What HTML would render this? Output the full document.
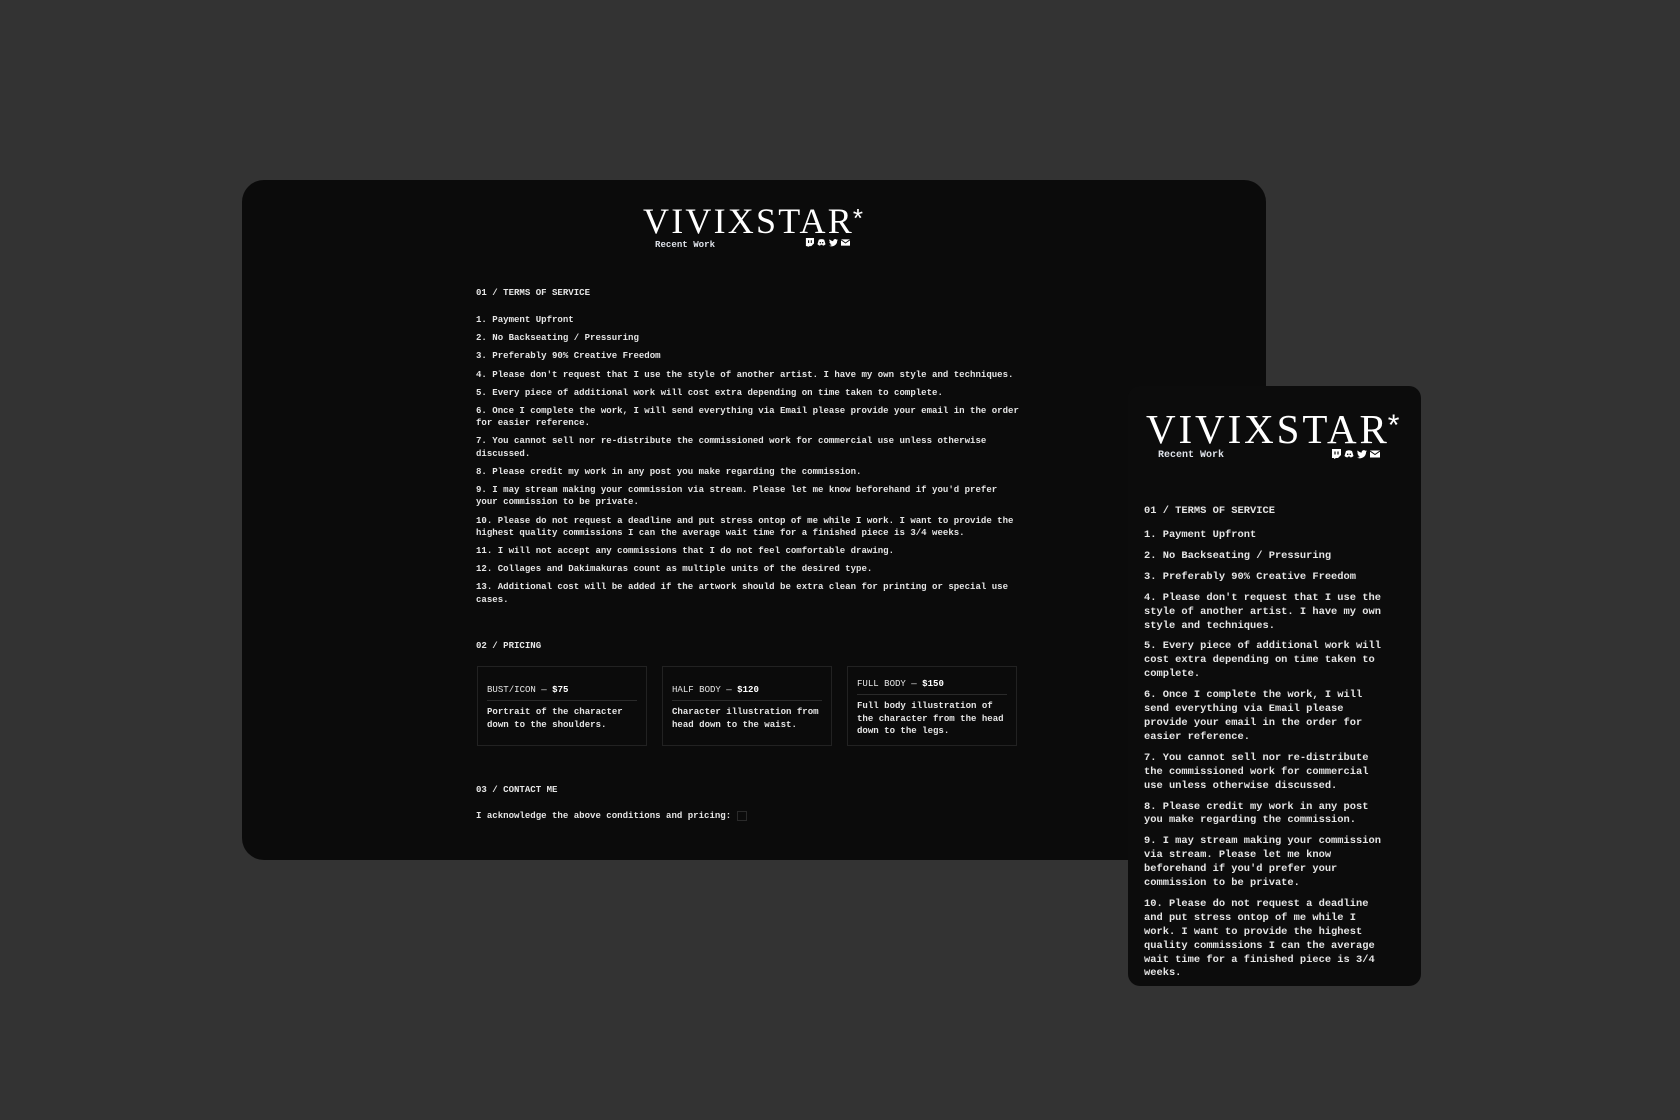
<!DOCTYPE html>
<html><head><meta charset="utf-8"><style>
*{margin:0;padding:0;box-sizing:border-box}
body{width:1680px;height:1120px;background:#333;position:relative;overflow:hidden;font-family:"Liberation Mono",monospace;color:#e6e6e6}
.card{position:absolute;background:#0b0b0b;overflow:hidden}
.main{left:242px;top:180px;width:1024px;height:680px;border-radius:22px}
.phone{left:1128px;top:386px;width:293px;height:600px;border-radius:12px;background:#0c0c0c}
.logo{position:absolute;font-family:"Liberation Serif",serif;color:#fff;white-space:nowrap}
.logo sup{font-family:"Liberation Sans",sans-serif;vertical-align:top;position:relative}
.rw{position:absolute;font-weight:bold;color:#dfe3ea;white-space:nowrap}
.icons{position:absolute;display:flex;gap:3px}
.icons svg{display:block}
.sec{position:absolute;left:234px;width:547px;font-size:9.05px;line-height:12.3px;font-weight:bold}
.sec p{margin-bottom:5.9px}
.h{position:absolute;left:234px;font-size:9.05px;font-weight:bold;white-space:nowrap}
.pc{position:absolute;top:486px;width:170px;height:80px;border:1px solid #222;padding:0 9px;font-size:9.05px;line-height:12.3px;font-weight:bold}
.pc .t{border-bottom:1px solid #2a2a2a;padding-bottom:4px;margin-bottom:5px;font-weight:normal}
.pc b{color:#fff}
.ph{position:absolute;left:16px;width:242px;font-size:10.4px;line-height:13.9px;font-weight:bold}
.ph p{margin-bottom:7px}
.cb{display:inline-block;width:10px;height:10px;border:1px solid #2a2a2a;vertical-align:middle}
</style></head><body>

<div class="card main">
  <div class="logo" style="left:401px;top:21px;font-size:36px;line-height:40px;letter-spacing:2.2px">VIVIXSTAR<sup style="font-size:26px;top:-3px;left:-1px">*</sup></div>
  <div class="rw" style="left:413px;top:59px;font-size:9.1px">Recent Work</div>
  <div class="icons" style="left:563px;top:58px">
    <svg width="9" height="9" viewBox="0 0 10 10"><path d="M1 0h9v6l-3 3H5L3 10V9H1z" fill="#fff"/><path d="M4 2.5v3M7 2.5v3" stroke="#0b0b0b" stroke-width="1.2"/></svg>
    <svg width="9" height="9" viewBox="0 0 10 10"><path d="M2 2q3-1.5 6 0l1.5 5q-1.5 1.5-3 1.5l-.5-1h-2l-.5 1Q2 8.5.5 7z" fill="#fff"/><circle cx="3.7" cy="5.3" r=".8" fill="#0b0b0b"/><circle cx="6.3" cy="5.3" r=".8" fill="#0b0b0b"/></svg>
    <svg width="9" height="9" viewBox="0 0 10 10"><path d="M10 2q-.8.4-1.3.4.8-.6 1-1.2-.8.5-1.4.6A2.2 2.2 0 0 0 4.6 3.6 6 6 0 0 1 .7 1.5a2.2 2.2 0 0 0 .6 2.9q-.4 0-.9-.3a2.2 2.2 0 0 0 1.7 2.1q-.5.2-1 .1a2.2 2.2 0 0 0 2 1.5A4.4 4.4 0 0 1 0 8.6 6.2 6.2 0 0 0 9.1 3z" fill="#fff"/></svg>
    <svg width="9" height="9" viewBox="0 0 10 10"><rect x="0" y="1.5" width="10" height="7" fill="#fff"/><path d="M0 2l5 3.5L10 2" stroke="#0b0b0b" stroke-width="1" fill="none"/></svg>
  </div>

  <div class="h" style="top:107px">01 / TERMS OF SERVICE</div>
  <div class="sec" style="top:134px">
    <p>1. Payment Upfront</p>
    <p>2. No Backseating / Pressuring</p>
    <p>3. Preferably 90% Creative Freedom</p>
    <p>4. Please don't request that I use the style of another artist. I have my own style and techniques.</p>
    <p>5. Every piece of additional work will cost extra depending on time taken to complete.</p>
    <p>6. Once I complete the work, I will send everything via Email please provide your email in the order for easier reference.</p>
    <p>7. You cannot sell nor re-distribute the commissioned work for commercial use unless otherwise discussed.</p>
    <p>8. Please credit my work in any post you make regarding the commission.</p>
    <p>9. I may stream making your commission via stream. Please let me know beforehand if you'd prefer your commission to be private.</p>
    <p>10. Please do not request a deadline and put stress ontop of me while I work. I want to provide the highest quality commissions I can the average wait time for a finished piece is 3/4 weeks.</p>
    <p>11. I will not accept any commissions that I do not feel comfortable drawing.</p>
    <p>12. Collages and Dakimakuras count as multiple units of the desired type.</p>
    <p>13. Additional cost will be added if the artwork should be extra clean for printing or special use cases.</p>
  </div>

  <div class="h" style="top:460px">02 / PRICING</div>
  <div class="pc" style="left:235px;padding-top:17px"><div class="t">BUST/ICON — <b>$75</b></div>Portrait of the character down to the shoulders.</div>
  <div class="pc" style="left:420px;padding-top:17px"><div class="t">HALF BODY — <b>$120</b></div>Character illustration from head down to the waist.</div>
  <div class="pc" style="left:605px;padding-top:11px"><div class="t">FULL BODY — <b>$150</b></div>Full body illustration of the character from the head down to the legs.</div>

  <div class="h" style="top:604px">03 / CONTACT ME</div>
  <div class="h" style="top:630px">I acknowledge the above conditions and pricing: <span class="cb"></span></div>
</div>

<div class="card phone">
  <div class="logo" style="left:18px;top:21px;font-size:41px;line-height:44px;letter-spacing:2.9px">VIVIXSTAR<sup style="font-size:30px;top:-3px;left:-2px">*</sup></div>
  <div class="rw" style="left:30px;top:64px;font-size:10px">Recent Work</div>
  <div class="icons" style="left:203px;top:63px">
    <svg width="10" height="10" viewBox="0 0 10 10"><path d="M1 0h9v6l-3 3H5L3 10V9H1z" fill="#fff"/><path d="M4 2.5v3M7 2.5v3" stroke="#0c0c0c" stroke-width="1.2"/></svg>
    <svg width="10" height="10" viewBox="0 0 10 10"><path d="M2 2q3-1.5 6 0l1.5 5q-1.5 1.5-3 1.5l-.5-1h-2l-.5 1Q2 8.5.5 7z" fill="#fff"/><circle cx="3.7" cy="5.3" r=".8" fill="#0c0c0c"/><circle cx="6.3" cy="5.3" r=".8" fill="#0c0c0c"/></svg>
    <svg width="10" height="10" viewBox="0 0 10 10"><path d="M10 2q-.8.4-1.3.4.8-.6 1-1.2-.8.5-1.4.6A2.2 2.2 0 0 0 4.6 3.6 6 6 0 0 1 .7 1.5a2.2 2.2 0 0 0 .6 2.9q-.4 0-.9-.3a2.2 2.2 0 0 0 1.7 2.1q-.5.2-1 .1a2.2 2.2 0 0 0 2 1.5A4.4 4.4 0 0 1 0 8.6 6.2 6.2 0 0 0 9.1 3z" fill="#fff"/></svg>
    <svg width="10" height="10" viewBox="0 0 10 10"><rect x="0" y="1.5" width="10" height="7" fill="#fff"/><path d="M0 2l5 3.5L10 2" stroke="#0c0c0c" stroke-width="1" fill="none"/></svg>
  </div>
  <div class="ph" style="top:119px">01 / TERMS OF SERVICE</div>
  <div class="ph" style="top:143px">
    <p>1. Payment Upfront</p>
    <p>2. No Backseating / Pressuring</p>
    <p>3. Preferably 90% Creative Freedom</p>
    <p>4. Please don't request that I use the style of another artist. I have my own style and techniques.</p>
    <p>5. Every piece of additional work will cost extra depending on time taken to complete.</p>
    <p>6. Once I complete the work, I will send everything via Email please provide your email in the order for easier reference.</p>
    <p>7. You cannot sell nor re-distribute the commissioned work for commercial use unless otherwise discussed.</p>
    <p>8. Please credit my work in any post you make regarding the commission.</p>
    <p>9. I may stream making your commission via stream. Please let me know beforehand if you'd prefer your commission to be private.</p>
    <p>10. Please do not request a deadline and put stress ontop of me while I work. I want to provide the highest quality commissions I can the average wait time for a finished piece is 3/4 weeks.</p>
  </div>
</div>
</body></html>
